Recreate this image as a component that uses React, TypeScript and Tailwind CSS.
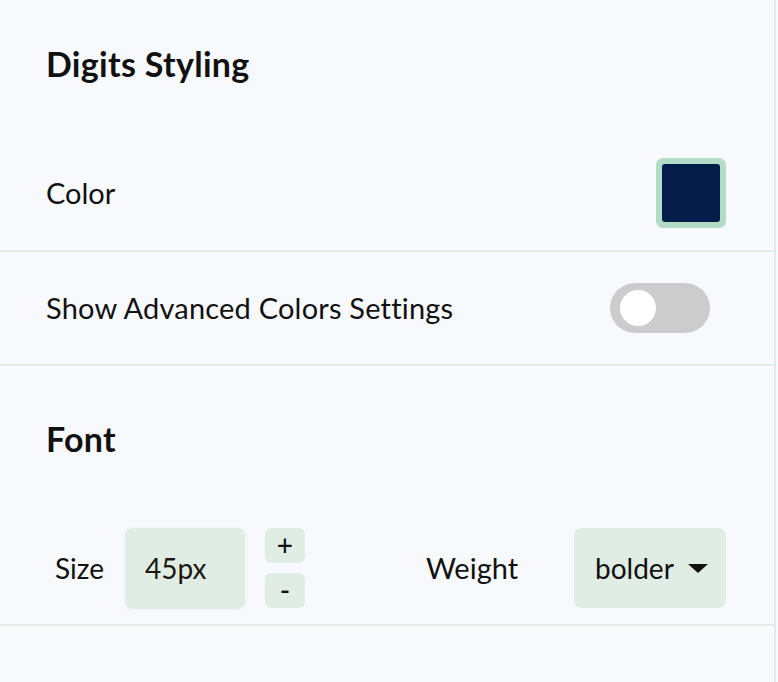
import React from "react";

export default function App() {
  return (
    <div
      className="w-[778px] h-[682px] bg-[#f8f9fd] text-[#111111] overflow-hidden"
      style={{ fontFamily: "Lato, 'Noto Sans', sans-serif" }}
    >
      <div className="w-[776px] h-full border-r-2 border-[#e0ece6]">
        <div className="h-[136px] pb-[9px] pl-[46px] flex items-center">
          <h2 className="text-[34px] font-bold leading-none tracking-[0.3px]">Digits Styling</h2>
        </div>
        <div className="h-[116px] border-b-2 border-[#e3ede8] pl-[46px] pr-[48px] flex items-center justify-between">
          <span className="text-[29px]">Color</span>
          <div className="w-[70px] h-[70px] rounded-[7px] bg-[#b3dcc6] p-[6px]">
            <div className="w-full h-full rounded-[3px] bg-[#031d48]" />
          </div>
        </div>
        <div className="h-[114px] border-b-2 border-[#e3ede8] pl-[46px] pr-[64px] flex items-center justify-between">
          <span className="text-[29px] tracking-[0.2px]">Show Advanced Colors Settings</span>
          <div className="w-[100px] h-[50px] rounded-full bg-[#cccccc] flex items-center pl-[10px]">
            <div className="w-[36px] h-[36px] rounded-full bg-white" />
          </div>
        </div>
        <div className="h-[146px] pl-[46px] flex items-center">
          <h2 className="text-[34px] font-bold leading-none tracking-[0.3px]">Font</h2>
        </div>
        <div className="h-[114px] border-b-2 border-[#e3ede8] pl-[55px] pr-[48px] flex items-center">
          <span className="text-[28px]">Size</span>
          <div className="ml-[21px] w-[120px] h-[81px] rounded-[8px] bg-[#e0ede5] shadow-[0_1px_6px_rgba(0,0,0,0.04)] flex items-center pl-[20px]">
            <span className="text-[28px] text-[#1c1710]">45px</span>
          </div>
          <div className="ml-[20px] flex flex-col gap-[10px]">
            <button className="w-[40px] h-[35px] rounded-[6px] bg-[#e0ede5] text-[28px] font-medium leading-none flex items-center justify-center pb-[2px]">+</button>
            <button className="w-[40px] h-[35px] rounded-[6px] bg-[#e0ede5] text-[28px] font-medium leading-none flex items-center justify-center pb-[2px]">-</button>
          </div>
          <span className="ml-[121px] text-[29px]">Weight</span>
          <div className="ml-auto w-[152px] h-[80px] rounded-[8px] bg-[#e0ede5] flex items-center pl-[21px] gap-[14px]">
            <span className="text-[28px]">bolder</span>
            <svg width="20" height="9" viewBox="0 0 20 9">
              <polygon points="0,0 20,0 10,9" fill="#111111" />
            </svg>
          </div>
        </div>
      </div>
    </div>
  );
}
